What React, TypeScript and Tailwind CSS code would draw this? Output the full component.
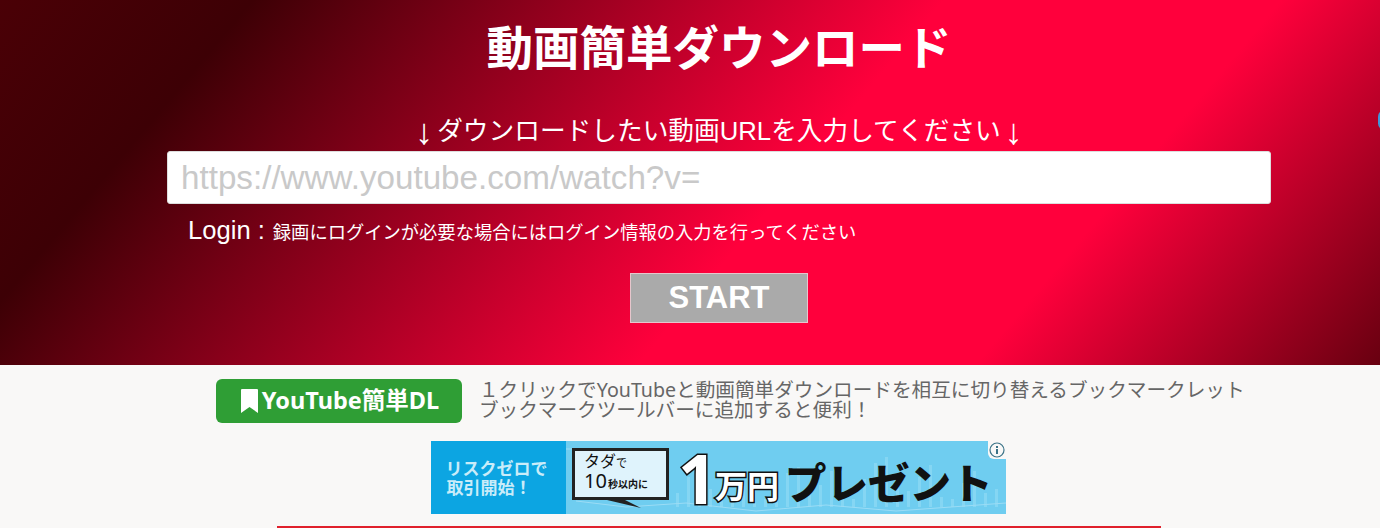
import React from "react";

const jp = "font-['Liberation_Sans','Noto_Sans_CJK_JP',sans-serif]";
const noto = "font-['Noto_Sans','Noto_Sans_CJK_JP',sans-serif]";

function AdChart() {
  const bars = [14, 30, 30, 18, 8, 12, 26, 20, 8, 10, 34, 40, 14, 22, 36, 12, 8, 28, 44, 50, 20, 16, 30, 42, 10, 8, 24, 36, 14, 18];
  return (
    <svg className="absolute inset-0 h-full w-full" viewBox="0 0 440 73" preserveAspectRatio="none">
      {bars.map((h, i) => (
        <rect key={i} x={110 + i * 11} y={66 - h} width="3" height={h} fill="#95dcf5" opacity="0.6" />
      ))}
      <path d="M0 8 H30 M10 60 L60 66 L120 62 L190 70 L260 64 L330 70 L440 62" stroke="#9bdcf5" strokeWidth="1" fill="none" />
    </svg>
  );
}

export default function App() {
  return (
    <div className={`relative h-[528px] w-[1380px] overflow-hidden bg-[#f9f8f7] ${jp}`}>
      <section className="flex h-[365px] flex-col items-center bg-[linear-gradient(130deg,#4a0006_0%,#3d0005_15%,#ff003c_56%,#ff003c_76%,#680010_100%)] pl-[58px] pt-[18px] text-white">
        <h1 className="h-[62px] text-[46.5px] font-bold leading-[62px]">動画簡単ダウンロード</h1>
        <p className="mb-[2px] mt-[34px] flex h-[35px] items-center gap-[4px] text-[25.7px] leading-[33px]">
          <span className="text-[36px] font-light leading-[33px]">↓</span>
          <span>ダウンロードしたい動画URLを入力してください</span>
          <span className="text-[36px] font-light leading-[33px]">↓</span>
        </p>
        <div className="flex h-[53px] w-[1104px] items-center rounded-[3px] border border-[#ddd] bg-white px-[13px] text-[33.2px] text-[#c9c9c9]">
          https://www.youtube.com/watch?v=
        </div>
        <div className="mt-[9px] flex w-[1104px] items-baseline pl-[21px]">
          <span className="text-[25.6px] leading-[34px]">Login :</span>
          <span className="ml-[8px] text-[18.3px] leading-[34px]">録画にログインが必要な場合にはログイン情報の入力を行ってください</span>
        </div>
        <div className="mt-[23px] flex h-[50px] w-[178px] items-center justify-center border border-[#e6c6cc] bg-[#aaaaaa] text-[31px] font-bold">START</div>
      </section>

      <div className="ml-[216px] mt-[14px] flex items-center">
        <div className={`flex h-[44px] w-[246px] items-center justify-center gap-[4px] rounded-[6px] bg-[#2f9e35] text-[23.5px] font-bold text-white ${noto}`}>
          <svg className="ml-[2px]" width="17" height="24" viewBox="0 0 17 24" fill="white"><path d="M0 1A1 1 0 0 1 1 0h15A1 1 0 0 1 17 1V24l-8.5-6-8.5 6z" /></svg>
          YouTube簡単DL
        </div>
        <div className={`mb-[2px] ml-[17px] text-[19.64px] leading-[20px] text-[#666] ${noto}`}>
          <div>１クリックでYouTubeと動画簡単ダウンロードを相互に切り替えるブックマークレット</div>
          <div>ブックマークツールバーに追加すると便利！</div>
        </div>
      </div>

      <div className={`relative ml-[431px] mt-[18px] flex h-[73px] w-[575px] bg-[#6fcdf0] ${noto}`}>
        <div className="z-10 flex w-[135px] flex-col items-center justify-center bg-[#0ca5e2] pr-[4px] text-[17px] font-bold leading-[19px] text-[#c9ecf9]">
          <span>リスクゼロで</span>
          <span className="w-[100px]">取引開始！</span>
        </div>
        <div className="relative flex flex-1 items-center">
          <AdChart />
          <div className="relative mb-[8px] ml-[6px] flex h-[52px] w-[97px] flex-col justify-center border-[3px] border-[#222] bg-[#dff3fc] pl-[9px] text-[#111]">
            <span className="text-[16px] leading-[17px]">タダ<span className="text-[11px]">で</span></span>
            <span className="text-[20px] leading-[20px]">10<span className="ml-[1px] text-[10px] font-bold">秒以内に</span></span>
            <svg className="absolute left-[24px] top-[46px]" width="44" height="12" viewBox="0 0 44 12"><path d="M0 0 L20 0 L42 11 L8 3z" fill="#222" /></svg>
          </div>
          <div className="relative ml-[9px] flex items-end font-black text-[#111]">
            <span className="text-[68px] font-bold leading-[66px] text-white [-webkit-text-stroke:3px_#111] [paint-order:stroke_fill]">1</span>
            <span className="mb-[5px] ml-[-2px] text-[32px] font-bold leading-[40px] text-white [-webkit-text-stroke:3px_#111] [paint-order:stroke_fill]">万円</span>
            <span className="mb-[2px] ml-[6px] text-[41.5px] leading-[52px]">プレゼント</span>
          </div>
        </div>
        <div className="absolute right-0 top-0 z-20 flex h-[18px] w-[18px] items-center justify-center rounded-bl-[6px] bg-[#f9f8f7]">
          <svg width="16" height="16" viewBox="0 0 16 16" fill="none"><circle cx="8" cy="8" r="7" stroke="#3b7387" strokeWidth="1.2" /><rect x="7" y="7" width="2" height="5" fill="#3b7387" /><rect x="7" y="4" width="2" height="2" fill="#3b7387" /></svg>
        </div>
      </div>

      <div className="ml-[277px] mt-[12px] h-[2px] w-[884px] bg-[#e0202c]" />

      <div className="absolute right-[-11px] top-[110px] h-[20px] w-[13px] rounded-full bg-[#3f95d8]" />
    </div>
  );
}
